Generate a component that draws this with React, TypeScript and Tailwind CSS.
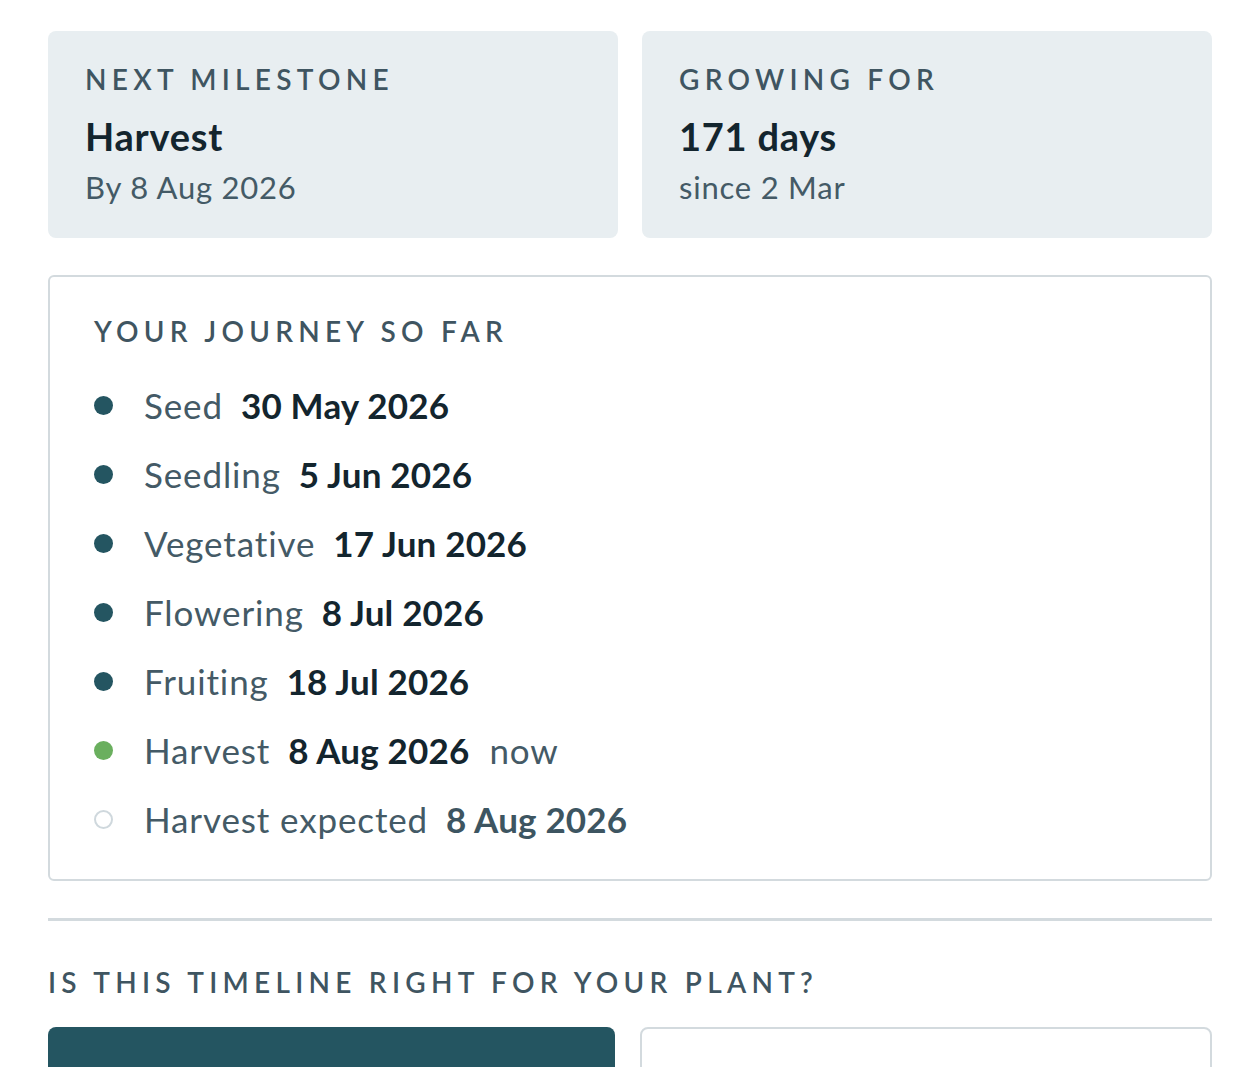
import React from "react"

type Stage = {
    name: string
    date: string
    state: "done" | "current" | "upcoming"
}

const stages: Stage[] = [
    { name: "Seed", date: "30 May 2026", state: "done" },
    { name: "Seedling", date: "5 Jun 2026", state: "done" },
    { name: "Vegetative", date: "17 Jun 2026", state: "done" },
    { name: "Flowering", date: "8 Jul 2026", state: "done" },
    { name: "Fruiting", date: "18 Jul 2026", state: "done" },
    { name: "Harvest", date: "8 Aug 2026", state: "current" },
    { name: "Harvest expected", date: "8 Aug 2026", state: "upcoming" },
]

function StatCard({ label, value, sub }: { label: string; value: string; sub: string }) {
    return (
        <div className="rounded-[8px] bg-[#e8eef1] px-[37px] pt-[30px] pb-[31px]">
            <p className="text-[28px] leading-[36px] font-semibold tracking-[0.188em] uppercase text-[#3f5561]">{label}</p>
            <p className="mt-[16px] text-[38px] leading-[46px] font-bold tracking-[0.02em] text-[#13252e]">{value}</p>
            <p className="mt-[8px] text-[31px] leading-[40px] tracking-[0.025em] text-[#445a66]">{sub}</p>
        </div>
    )
}

function Dot({ state }: { state: Stage["state"] }) {
    if (state === "upcoming") {
        return <span className="h-[19px] w-[19px] shrink-0 rounded-full border-2 border-[#cfd8dd] bg-white" />
    }
    return (
        <span
            className={
                state === "current"
                    ? "h-[19px] w-[19px] shrink-0 rounded-full bg-[#6aaf5e]"
                    : "h-[19px] w-[19px] shrink-0 rounded-full bg-[#245561]"
            }
        />
    )
}

export default function App() {
    return (
        <div className="min-h-screen bg-white px-[48px] pt-[31px] font-['Lato',sans-serif]">
            {/* Summary cards */}
            <div className="grid grid-cols-2 gap-[24px]">
                <StatCard label="Next milestone" value="Harvest" sub="By 8 Aug 2026" />
                <StatCard label="Growing for" value="171 days" sub="since 2 Mar" />
            </div>

            {/* Journey */}
            <div className="mt-[37px] rounded-[6px] border-2 border-[#d3dade] pl-[44px] pr-[40px] pt-[36px] pb-[25px]">
                <p className="text-[28px] leading-[36px] font-semibold tracking-[0.188em] uppercase text-[#3f5561]">
                    Your journey so far
                </p>
                <ul className="mt-[22px]">
                    {stages.map((s) => (
                        <li key={s.name} className="flex h-[69px] items-center text-[35px]">
                            <Dot state={s.state} />
                            <span className="ml-[31px] tracking-[0.025em] text-[#445a66]">{s.name}</span>
                            <span
                                className={
                                    s.state === "upcoming"
                                        ? "ml-[18px] font-bold tracking-[0.005em] text-[#3d5561]"
                                        : "ml-[18px] font-bold tracking-[0.005em] text-[#13252e]"
                                }
                            >
                                {s.date}
                            </span>
                            {s.state === "current" && (
                                <span className="ml-[20px] tracking-[0.025em] text-[#445a66]">now</span>
                            )}
                        </li>
                    ))}
                </ul>
            </div>

            <hr className="mt-[37px] h-[3px] border-0 bg-[#d3dade]" />

            {/* Feedback */}
            <p className="mt-[43px] text-[28px] leading-[36px] font-semibold tracking-[0.188em] uppercase text-[#3f5561]">
                Is this timeline right for your plant?
            </p>
            <div className="mt-[27px] grid grid-cols-[567px_1fr] gap-[25px] pb-[40px]">
                <button aria-label="Yes" className="h-[100px] rounded-[8px] bg-[#245561]" />
                <button aria-label="No" className="h-[100px] rounded-[8px] border-2 border-[#d3dade] bg-white" />
            </div>
        </div>
    )
}
